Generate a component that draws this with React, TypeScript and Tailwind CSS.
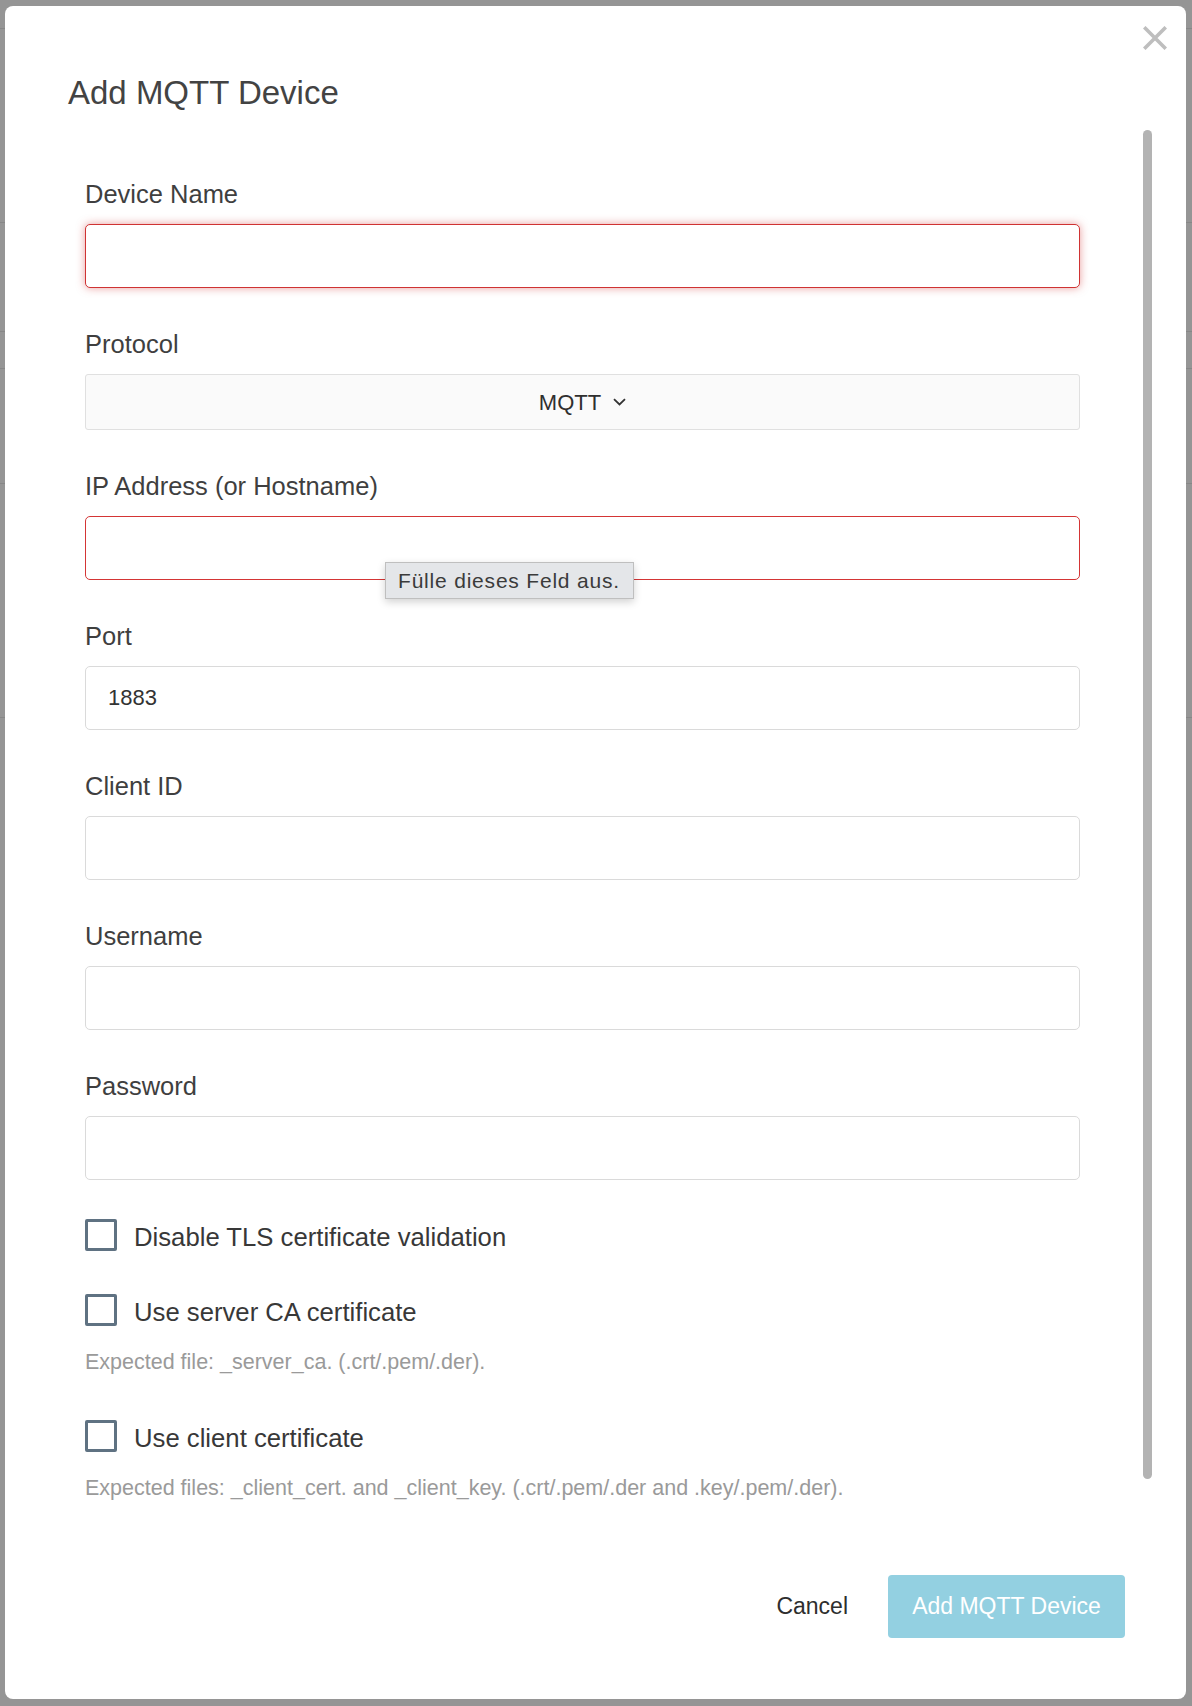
import React from "react";

const font = { fontFamily: '"Liberation Sans", Arial, Helvetica, sans-serif' };

interface FieldProps {
  label: string;
  last?: boolean;
  children: React.ReactNode;
}

const Field = ({ label, last, children }: FieldProps) => (
  <div className={last ? "flex flex-col" : "flex flex-col mb-[41px]"}>
    <label className="block text-[25.5px] leading-[30px] text-[#3f3f3f] mb-[15px]">
      {label}
    </label>
    {children}
  </div>
);

const TextInput = ({
  value,
  invalid,
  focused,
}: {
  value?: string;
  invalid?: boolean;
  focused?: boolean;
}) => {
  let cls =
    "w-full h-[64px] rounded-[5px] bg-white px-[22px] text-[22px] text-[#333] outline-none border border-[#dadada]";
  if (invalid && focused) {
    cls =
      "w-full h-[64px] rounded-[5px] bg-white px-[22px] text-[22px] text-[#333] outline-none border-[1.5px] border-[#cf3333] shadow-[0_0_8px_rgba(214,60,60,0.5)]";
  } else if (invalid) {
    cls =
      "w-full h-[64px] rounded-[5px] bg-white px-[22px] text-[22px] text-[#333] outline-none border border-[#d43535]";
  }
  return <input className={cls} style={font} defaultValue={value} />;
};

const Checkbox = ({ label }: { label: string }) => (
  <div className="flex items-start gap-[17px]">
    <span className="block w-[32px] h-[32px] shrink-0 border-[3px] border-[#5f7282] rounded-[2px] bg-white" />
    <span className="mt-[3px] text-[25.7px] leading-[30px] text-[#383838]">{label}</span>
  </div>
);

const Help = ({ children }: { children: React.ReactNode }) => (
  <p className="text-[21.5px] leading-[26px] text-[#9a9a9a]">{children}</p>
);

export default function App() {
  return (
    <div className="relative w-[1192px] h-[1706px] bg-[#959595] overflow-hidden" style={font}>
      {/* dimmed page behind the dialog */}
      <div className="flex flex-col">
        <div className="h-[29px] border-b border-[#878787]" />
        <div className="h-[194px] border-b border-[#878787]" />
        <div className="h-[109px] border-b border-[#878787]" />
        <div className="h-[37px] border-b border-[#878787]" />
        <div className="h-[115px] border-b border-[#878787]" />
        <div className="h-[234px] border-b border-[#878787]" />
      </div>

      <div className="absolute left-[5px] top-[6px] w-[1181px] h-[1693px] bg-white rounded-[8px] flex flex-col">
        <div className="flex justify-between items-start pt-[20px] pl-[63px] pr-[19px]">
          <h2 className="mt-[47px] text-[33px] leading-[40px] text-[#434343]">Add MQTT Device</h2>
          <button className="w-[24px] h-[24px]" aria-label="Close">
            <svg viewBox="0 0 24 24" width="24" height="24">
              <path d="M2.5 2.5 L21.5 21.5 M21.5 2.5 L2.5 21.5" stroke="#bebebe" strokeWidth="3.6" strokeLinecap="square" />
            </svg>
          </button>
        </div>

        <div className="flex h-[1400px] overflow-hidden pl-[80px]">
          <div className="w-[995px] shrink-0 pt-[66px] flex flex-col">
            <Field label="Device Name">
              <TextInput invalid focused />
            </Field>

            <Field label="Protocol">
              <div className="w-full h-[56px] rounded-[3px] border border-[#e0e0e0] bg-[#fafafa] flex items-center justify-center gap-[12px]">
                <span className="text-[22px] text-[#2f2f2f]">MQTT</span>
                <svg width="13" height="8" viewBox="0 0 13 8">
                  <path d="M1 1.2 L6.5 6.5 L12 1.2" fill="none" stroke="#333" strokeWidth="1.8" />
                </svg>
              </div>
            </Field>

            <Field label="IP Address (or Hostname)">
              <div className="relative">
                <TextInput invalid />
                <div className="absolute left-[300px] top-[46px] w-[249px] h-[37px] flex items-center pl-[12px] bg-[#e4e6e9] border border-[#bfbfbf] shadow-[0_3px_8px_rgba(0,0,0,0.18)] text-[21px] tracking-[0.8px] text-[#3b3b3b]">
                  Fülle dieses Feld aus.
                </div>
              </div>
            </Field>

            <Field label="Port">
              <TextInput value="1883" />
            </Field>

            <Field label="Client ID">
              <TextInput />
            </Field>

            <Field label="Username">
              <TextInput />
            </Field>

            <Field label="Password" last>
              <TextInput />
            </Field>

            <div className="mt-[39px]">
              <Checkbox label="Disable TLS certificate validation" />
            </div>
            <div className="mt-[42px]">
              <Checkbox label="Use server CA certificate" />
            </div>
            <div className="mt-[22px]">
              <Help>Expected file: _server_ca. (.crt/.pem/.der).</Help>
            </div>
            <div className="mt-[45px]">
              <Checkbox label="Use client certificate" />
            </div>
            <div className="mt-[22px]">
              <Help>
                Expected files: _client_cert. and _client_key. (.crt/.pem/.der and .key/.pem/.der).
              </Help>
            </div>
          </div>

          <div className="ml-[63px] pt-[17px]">
            <div className="w-[9px] h-[1349px] rounded-full bg-[#b3b3b3]" />
          </div>
        </div>

        <div className="flex justify-end items-center pt-[62px] pr-[61px]">
          <button className="mr-[40px] text-[23px] text-[#2e2e2e]">Cancel</button>
          <button className="w-[237px] h-[63px] rounded-[4px] bg-[#93d0e1] text-[23px] text-white">
            Add MQTT Device
          </button>
        </div>
      </div>
    </div>
  );
}
